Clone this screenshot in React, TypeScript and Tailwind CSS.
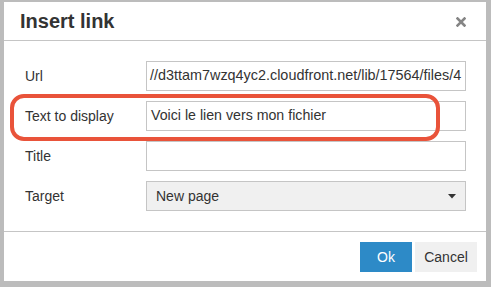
import React from "react";

const font = { fontFamily: '"Liberation Sans", Arial, sans-serif' };

function Row({ label, children }: { label: string; children: React.ReactNode }) {
  return (
    <div className="flex items-center h-[30px]">
      <div className="w-[142px] pl-[21px] text-[14px] text-[#333]">{label}</div>
      {children}
    </div>
  );
}

export default function App() {
  return (
    <div
      className="relative w-[491px] h-[287px] bg-[#bcbcbc] overflow-hidden pl-[4px] pt-[2px]"
      style={font}
    >
      <div className="relative w-[482px] h-[279px] bg-white flex flex-col">
        {/* header */}
        <div className="h-[39px] border-b border-[#c5c5c5] flex items-center justify-between pl-[16px] pr-[20px]">
          <div className="text-[20px] font-bold text-[#333] leading-[24px]">Insert link</div>
          <svg width="10" height="10" viewBox="0 0 10 10" className="mt-[2px]">
            <path d="M1.5 1.5 L8.5 8.5 M8.5 1.5 L1.5 8.5" stroke="#858585" strokeWidth="2.6" strokeLinecap="square" />
          </svg>
        </div>
        {/* body */}
        <div className="flex flex-col gap-[10px] pt-[20px] pb-[20px] border-b border-[#c5c5c5]">
          <Row label="Url">
            <div className="w-[320px] h-[30px] border border-[#c5c5c5] overflow-hidden whitespace-nowrap pl-[3px] flex items-center text-[14.4px] text-[#333]">
              //d3ttam7wzq4yc2.cloudfront.net/lib/17564/files/4
            </div>
          </Row>
          <Row label="Text to display">
            <div className="w-[320px] h-[30px] border border-[#c5c5c5] overflow-hidden whitespace-nowrap pl-[4px] flex items-center text-[14.2px] text-[#333]">
              Voici le lien vers mon fichier
            </div>
          </Row>
          <Row label="Title">
            <div className="w-[320px] h-[30px] border border-[#c5c5c5]" />
          </Row>
          <Row label="Target">
            <div className="w-[320px] h-[30px] border border-[#c5c5c5] bg-[#f0f0f0] flex items-center justify-between pl-[9px] pr-[9px] text-[14px] text-[#333]">
              <span>New page</span>
              <svg width="8" height="5" viewBox="0 0 8 5">
                <path d="M0 0 L8 0 L4 4.5 Z" fill="#333" />
              </svg>
            </div>
          </Row>
        </div>
        {/* footer */}
        <div className="flex-1 flex justify-end items-start pt-[10px] pr-[9px] gap-[3px]">
          <div className="w-[52px] h-[30px] bg-[#2d8ac7] text-white text-[14px] flex items-center justify-center">Ok</div>
          <div className="w-[62px] h-[30px] bg-[#f0f0f0] text-[#333] text-[14px] flex items-center justify-center">Cancel</div>
        </div>
      </div>
      {/* red highlight */}
      <div className="absolute left-[10px] top-[94px] w-[430px] h-[47px] border-[4px] border-[#e9533a] rounded-[14px]" />
    </div>
  );
}
